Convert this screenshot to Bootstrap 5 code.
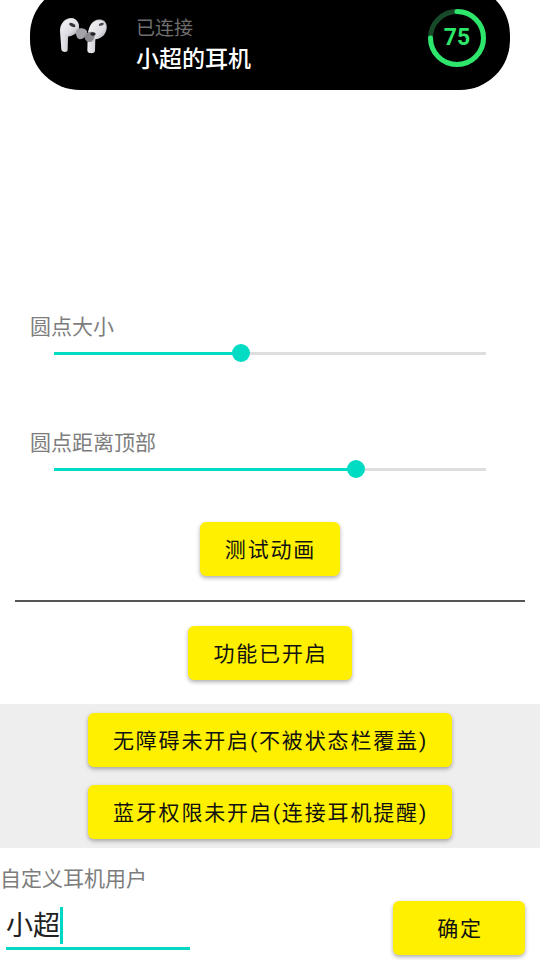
<!DOCTYPE html>
<html lang="zh">
<head>
<meta charset="utf-8">
<title>耳机设置</title>
<link href="https://cdn.jsdelivr.net/npm/bootstrap@5.3.0/dist/css/bootstrap.min.css" rel="stylesheet">
<style>
html,body{height:960px;overflow:hidden;background:#fff}
body{font-family:"Roboto","Noto Sans CJK SC",sans-serif}
.capsule{height:105px;margin:-15px 30px 0;padding:0 24px 0 20px;background:#000;border-radius:50px}
.buds{width:65px;height:50px;margin-right:21px;flex:none;margin-top:-5px}
.name-block{padding-top:17px}
.state-text{font-size:19px;line-height:26px;color:#6f6f6f}
.device-name{font-size:23px;line-height:32px;font-weight:500;color:#fff;margin-top:2px}
.ring-box{width:58px;height:58px}
.ring-num{font-size:23px;font-weight:700;color:#2ee66b;line-height:1}
.gap-top{margin-top:223px}
.field-label{font-size:21px;line-height:28px;color:#7d7d7d}
.indent-label{padding-left:30px}
.slider-row{padding:0 54px}
.dot-range{display:block;height:24px;padding:0;background:transparent}
.dot-range::-webkit-slider-runnable-track{height:3px;border-radius:0;background:linear-gradient(90deg,#00dcc4 var(--fill),#dedede var(--fill))}
.dot-range::-webkit-slider-thumb{width:18px;height:18px;margin-top:-7.5px;border-radius:50%;background:#00dcc4;border:0;box-shadow:none;-webkit-appearance:none;appearance:none}
.second-label{margin-top:64px}
.yellow-btn{height:54px;padding:3px 24px 0 25px;border:0;border-radius:6px;background:#fff000;color:#111;font-size:21px;letter-spacing:1.85px;line-height:51px;white-space:nowrap;box-shadow:0 2px 4px rgba(0,0,0,.32)}
.yellow-btn:hover,.yellow-btn:active{background:#fff000;color:#111}
.test-row{margin-top:41px}
.rule-line{height:2px;margin:24px 15px;background:#555;opacity:1;border:0}
.feature-grey{margin-top:24px;height:144px;padding-top:9px;background:#eee;gap:18px}
.custom-label{margin-top:17px}
.name-row{padding:0 15px 0 6px;margin-top:8px}
.name-field{width:184px;height:43px;border-bottom:3px solid #00d8c4;font-size:27px;line-height:38px;color:#222;margin-top:6px}
.caret-bar{display:inline-block;width:3px;height:37px;background:#00d8c4;vertical-align:top}
.ok-btn{width:132px;padding:3px 0 0 2px}
</style>
</head>
<body>
<div class="capsule d-flex align-items-center">
  <svg class="buds" viewBox="0 0 195 150" aria-hidden="true">
    <defs>
      <filter id="soft"><feGaussianBlur stdDeviation="1.8"/></filter>
      <linearGradient id="shell" x1="0" y1="0" x2="1" y2="1"><stop offset="0" stop-color="#f6f5f8"/><stop offset=".65" stop-color="#dddce2"/><stop offset="1" stop-color="#a5a3ab"/></linearGradient>
      <linearGradient id="stem" x1="0" y1="0" x2="1" y2="0"><stop offset="0" stop-color="#eeedf1"/><stop offset="1" stop-color="#aaa8b0"/></linearGradient>
    </defs>
    <g filter="url(#soft)">
      <path d="M30 62C30 38 48 22 66 24C80 26 90 42 87 60C80 72 66 78 54 80L53 120C53 128 35 128 34 118Z" fill="url(#stem)"/>
      <path d="M36 52C40 32 58 22 72 26C86 32 90 50 85 62C73 72 56 76 44 74C37 70 34 62 36 52Z" fill="url(#shell)"/>
      <ellipse cx="67" cy="45" rx="10" ry="5" transform="rotate(25 67 45)" fill="#34343a"/>
      <path d="M80 60C90 52 106 54 111 64C113 74 102 88 90 88C80 86 75 72 80 60Z" fill="#a4a3a9"/>
      <path d="M112 122L113 84C112 72 116 58 121 46C130 28 152 24 164 34C174 44 172 64 161 76C153 84 143 88 136 88L135 122C135 132 113 132 112 122Z" fill="url(#stem)"/>
      <path d="M116 62C120 42 140 26 158 33C171 40 172 60 161 75C151 86 134 90 123 86C116 80 114 70 116 62Z" fill="url(#shell)"/>
      <ellipse cx="154" cy="43" rx="8" ry="4" transform="rotate(-20 154 43)" fill="#4a4950"/>
      <path d="M104 78C108 68 122 62 131 68C137 74 133 92 122 96C111 98 102 88 104 78Z" fill="#8b8a90"/>
      <ellipse cx="129" cy="72" rx="8" ry="5.5" fill="#222227"/>
    </g>
  </svg>
  <div class="flex-grow-1 name-block">
    <div class="state-text">已连接</div>
    <div class="device-name">小超的耳机</div>
  </div>
  <div class="ring-box position-relative d-flex align-items-center justify-content-center">
    <svg class="position-absolute top-0 start-0" width="58" height="58" viewBox="0 0 58 58" aria-hidden="true">
      <circle cx="29" cy="29" r="26.5" fill="none" stroke="#164a29" stroke-width="5"/>
      <circle cx="29" cy="29" r="26.5" fill="none" stroke="#2ee66b" stroke-width="5" stroke-linecap="round" pathLength="100" stroke-dasharray="75 100" transform="rotate(-90 29 29)"/>
    </svg>
    <span class="ring-num">75</span>
  </div>
</div>

<div class="field-label indent-label gap-top">圆点大小</div>
<div class="slider-row">
  <input type="range" class="form-range dot-range" min="0" max="100" step="0.1" value="43.1" style="--fill:43.3%" aria-label="圆点大小">
</div>
<div class="field-label indent-label second-label">圆点距离顶部</div>
<div class="slider-row">
  <input type="range" class="form-range dot-range" min="0" max="100" step="0.1" value="70.8" style="--fill:70%" aria-label="圆点距离顶部">
</div>

<div class="d-flex justify-content-center test-row"><button type="button" class="btn yellow-btn">测试动画</button></div>
<hr class="rule-line">
<div class="d-flex justify-content-center"><button type="button" class="btn yellow-btn">功能已开启</button></div>

<div class="feature-grey d-flex flex-column align-items-center">
  <button type="button" class="btn yellow-btn">无障碍未开启(不被状态栏覆盖)</button>
  <button type="button" class="btn yellow-btn">蓝牙权限未开启(连接耳机提醒)</button>
</div>

<div class="field-label custom-label">自定义耳机用户</div>
<div class="name-row d-flex justify-content-between align-items-start">
  <div class="name-field"><span>小超</span><span class="caret-bar"></span></div>
  <button type="button" class="btn yellow-btn ok-btn">确定</button>
</div>
<script src="https://cdn.jsdelivr.net/npm/bootstrap@5.3.0/dist/js/bootstrap.bundle.min.js"></script>
</body>
</html>
